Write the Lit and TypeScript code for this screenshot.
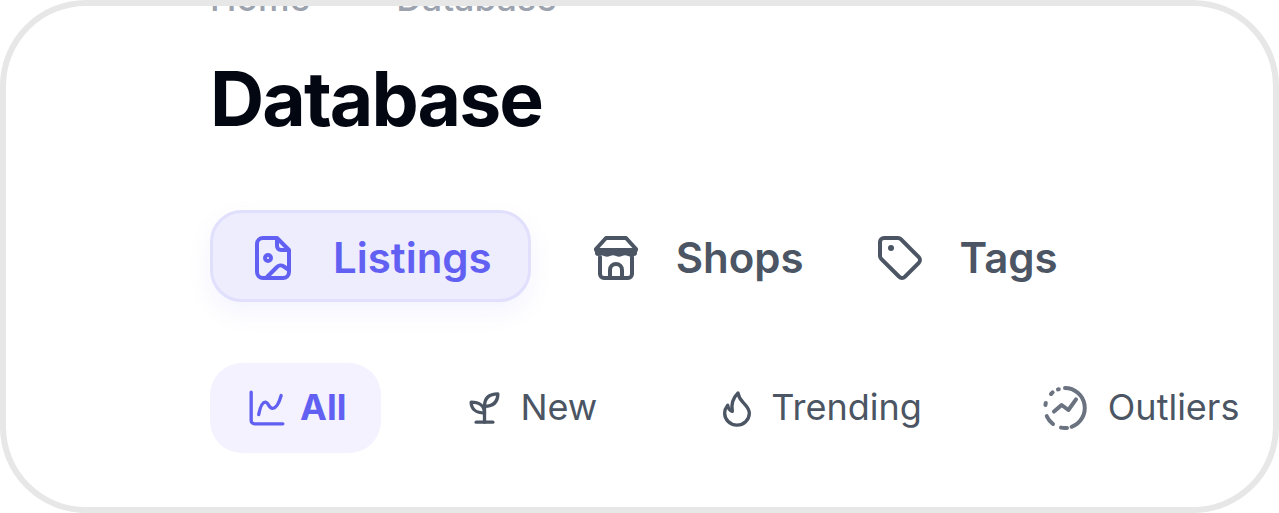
import { LitElement, html, css, svg } from "lit";
import { customElement } from "lit/decorators.js";

const icons: Record<string, unknown> = {
  listings: svg`<path d="M14 2H7a3 3 0 0 0-3 3v14a3 3 0 0 0 3 3h10a3 3 0 0 0 3-3V8z"/><path d="M14 2.500V6a2 2 0 0 0 2 2h3.500"/><circle cx="9.500" cy="12" r="1.500"/><path d="M9 21.500l5-5a2.500 2.500 0 0 1 3.200-.4L20 18"/>`,
  shops: svg`<path d="M7 2h10l5 5.500V8H2v-.5z"/><path class="solid" d="M1.500 8h21v1.500a1.500 1.500 0 0 1-1.500 1.500q-1.500.8-3 0t-3 0t-3 0t-3 0t-3 0t-3 0a1.500 1.500 0 0 1-1.500-1.500z"/><path d="M4 11.500V20a2 2 0 0 0 2 2h12a2 2 0 0 0 2-2v-8.500"/><path d="M9 22v-4a3 3 0 0 1 6 0v4"/>`,
  tags: svg`<path d="M4 2h7a2 2 0 0 1 1.400.6l9 9a2 2 0 0 1 0 2.800l-7 7a2 2 0 0 1-2.800 0l-9-9A2 2 0 0 1 2 11V4a2 2 0 0 1 2-2z"/><circle class="solid" cx="7.500" cy="7" r="1.500"/>`,
  all: svg`<path d="M2.500 2.500V19.500a2 2 0 0 0 2 2H21.500"/><path d="M7 16C8 11 9.500 8.500 11 8.500C13 8.500 13 12.500 15.500 12.200C18 12 19.500 8 20.500 4.500"/>`,
  new: svg`<path d="M5.500 20.500h10"/><path d="M10.500 20.500V11"/><path d="M10.500 11C10.500 6 13.500 3.500 18.500 3.500c0 5-3 7.500-8 7.500z"/><path d="M10.500 15C10.500 11 7.500 8.500 2.500 8.500c0 4 3 6.500 8 6.500z"/>`,
  trending: svg`<path d="M12 3c.5 3.500 2.300 4.800 4 6.700c1.700 1.900 2.800 3.300 2.800 5.500a7.400 7.200 0 0 1-14.800-.2c0-1.800.6-3.200 1.800-4.700c.3 1.800 1.200 3.200 2.800 3.700C8 11 8.500 6.500 12 3z"/>`,
  outliers: svg`<path d="M12 2a10 10 0 0 1 3.300 19.400"/><path d="M13 21.950a10 10 0 0 1-3-.15"/><path d="M6 20a10 10 0 0 1-3.100-3.900"/><path d="M2.200 10.500l.2-1"/><path d="M5 5l.8-.8"/><path d="M8.500 2.700l.4-.1"/><path d="M6.500 13.800l3.800-3.300 3.400 2.500 3.800-5.300"/>`,
};

@customElement("app-root")
export class AppRoot extends LitElement {
  static styles = css`
    :host {
      display: block;
      font-family: Inter, "Liberation Sans", sans-serif;
    }
    .frame {
      box-sizing: border-box;
      height: 513px;
      border: 6px solid #e7e7e7;
      border-radius: 86px;
      background: #fff;
      overflow: hidden;
      padding-left: 204px;
      white-space: nowrap;
    }
    .crumbs {
      display: flex;
      gap: 86px;
      margin-top: -27px;
      font-size: 35.500px;
      line-height: 40px;
      font-weight: 500;
      color: #9ca3af;
    }
    h1 {
      margin: 36px 0 0;
      font-size: 75px;
      line-height: 88px;
      font-weight: 700;
      letter-spacing: -1.900px;
      color: #030712;
    }
    .tabs {
      display: flex;
      gap: 48px;
      margin-top: 67px;
    }
    .tab {
      box-sizing: border-box;
      display: flex;
      align-items: center;
      gap: 36px;
      height: 92px;
      padding: 2px 8px 0 10px;
      border: 3px solid transparent;
      border-radius: 32px;
      font-size: 42px;
      font-weight: 600;
      color: #4b5563;
    }
    .tab svg {
      width: 48px;
      height: 48px;
      stroke-width: 2;
      margin-top: 2px;
    }
    .tab.active {
      padding: 2px 36px 0;
      background: #eeedfe;
      border-color: #e0dffc;
      color: #6160f2;
      box-shadow: 0 10px 24px rgba(97, 96, 242, 0.08);
    }
    .filters {
      display: flex;
      gap: 49px;
      margin-top: 61px;
    }
    .filter {
      box-sizing: border-box;
      display: flex;
      align-items: center;
      gap: 13px;
      height: 90px;
      padding: 0 35px 2px 37px;
      border-radius: 32px;
      font-size: 36px;
      font-weight: 400;
      color: #4b5563;
    }
    .filter svg {
      width: 40px;
      height: 40px;
      stroke-width: 2;
      margin-top: 2px;
    }
    .filter.active {
      background: #f3f2fe;
      color: #6160f2;
      font-weight: 700;
    }
    .filter.outliers svg {
      width: 48px;
      height: 48px;
      margin: 2px 6px 0 -2px;
      color: #6b7280;
    }
    svg {
      flex: none;
      fill: none;
      stroke: currentColor;
      stroke-linecap: round;
      stroke-linejoin: round;
    }
    svg .solid {
      fill: currentColor;
      stroke: none;
    }
  `;

  private icon(name: string) {
    return html`<svg viewBox="0 0 24 24">${icons[name]}</svg>`;
  }

  render() {
    return html`
      <div class="frame">
        <div class="crumbs"><span>Home</span><span>Database</span></div>
        <h1>Database</h1>
        <div class="tabs">
          <div class="tab active">${this.icon("listings")}Listings</div>
          <div class="tab">${this.icon("shops")}Shops</div>
          <div class="tab">${this.icon("tags")}Tags</div>
        </div>
        <div class="filters">
          <div class="filter active">${this.icon("all")}All</div>
          <div class="filter">${this.icon("new")}New</div>
          <div class="filter">${this.icon("trending")}Trending</div>
          <div class="filter outliers">${this.icon("outliers")}Outliers</div>
        </div>
      </div>
    `;
  }
}
